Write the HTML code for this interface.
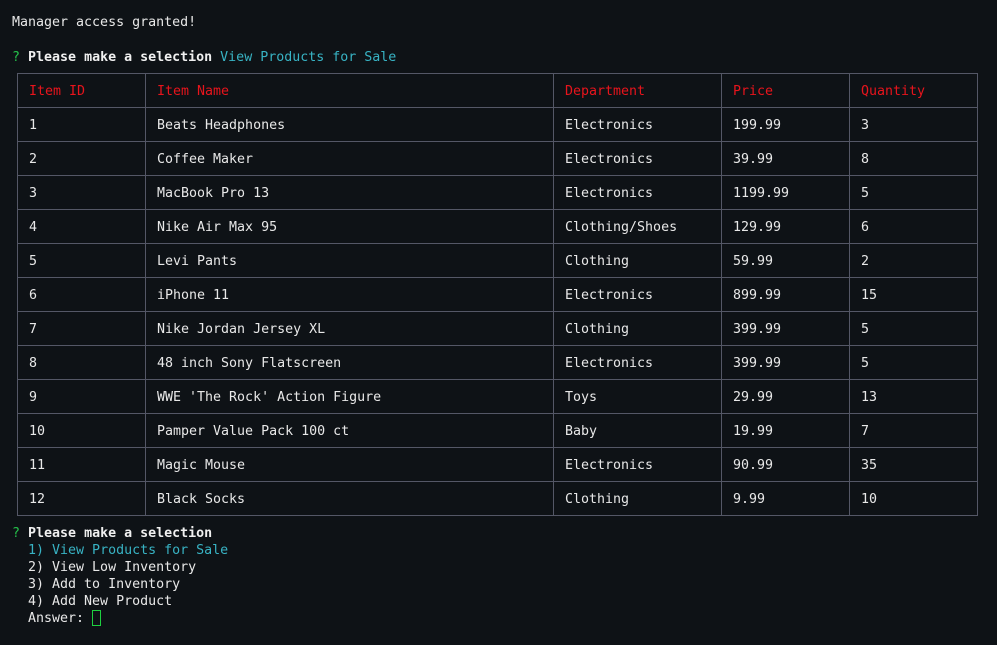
<!DOCTYPE html>
<html><head><meta charset="utf-8"><style>
body{margin:0;width:997px;height:645px;background:#0e1216;color:#e8e8e8;font-family:"DejaVu Sans Mono","Liberation Mono",monospace;font-size:13.3px;overflow:hidden;position:relative}
.l{position:absolute;left:12px;white-space:pre;line-height:17px}
b{font-weight:bold;color:#f0f0f0}
.g{color:#25c04a}.c{color:#38b3c4}
table{position:absolute;left:17px;top:73px;border-collapse:collapse;table-layout:fixed}
td{border:1px solid #545766;height:33px;padding:2px 0 0 11px;white-space:pre;box-sizing:border-box;line-height:17px}
tr.h td{color:#e8141c}
.cur{display:inline-block;width:9px;height:16px;border:1.5px solid #1ed040;vertical-align:-4px;box-sizing:border-box}
</style></head><body>
<div class="l" style="top:14px">Manager access granted!</div>
<div class="l" style="top:49px"><span class="g">?</span> <b>Please make a selection</b> <span class="c">View Products for Sale</span></div>
<table>
<colgroup><col style="width:128px"><col style="width:408px"><col style="width:168px"><col style="width:128px"><col style="width:128px"></colgroup>
<tr class="h" style="height:34px"><td>Item ID</td><td>Item Name</td><td>Department</td><td>Price</td><td>Quantity</td></tr>
<tr style="height:34px"><td>1</td><td>Beats Headphones</td><td>Electronics</td><td>199.99</td><td>3</td></tr>
<tr style="height:34px"><td>2</td><td>Coffee Maker</td><td>Electronics</td><td>39.99</td><td>8</td></tr>
<tr style="height:34px"><td>3</td><td>MacBook Pro 13</td><td>Electronics</td><td>1199.99</td><td>5</td></tr>
<tr style="height:34px"><td>4</td><td>Nike Air Max 95</td><td>Clothing/Shoes</td><td>129.99</td><td>6</td></tr>
<tr style="height:34px"><td>5</td><td>Levi Pants</td><td>Clothing</td><td>59.99</td><td>2</td></tr>
<tr style="height:34px"><td>6</td><td>iPhone 11</td><td>Electronics</td><td>899.99</td><td>15</td></tr>
<tr style="height:34px"><td>7</td><td>Nike Jordan Jersey XL</td><td>Clothing</td><td>399.99</td><td>5</td></tr>
<tr style="height:34px"><td>8</td><td>48 inch Sony Flatscreen</td><td>Electronics</td><td>399.99</td><td>5</td></tr>
<tr style="height:34px"><td>9</td><td>WWE 'The Rock' Action Figure</td><td>Toys</td><td>29.99</td><td>13</td></tr>
<tr style="height:34px"><td>10</td><td>Pamper Value Pack 100 ct</td><td>Baby</td><td>19.99</td><td>7</td></tr>
<tr style="height:34px"><td>11</td><td>Magic Mouse</td><td>Electronics</td><td>90.99</td><td>35</td></tr>
<tr style="height:34px"><td>12</td><td>Black Socks</td><td>Clothing</td><td>9.99</td><td>10</td></tr>
</table>
<div class="l" style="top:525px"><span class="g">?</span> <b>Please make a selection</b></div>
<div class="l" style="top:542px">  <span class="c">1) View Products for Sale</span></div>
<div class="l" style="top:559px">  2) View Low Inventory</div>
<div class="l" style="top:576px">  3) Add to Inventory</div>
<div class="l" style="top:593px">  4) Add New Product</div>
<div class="l" style="top:610px">  Answer: <span class="cur"></span></div>
</body></html>
